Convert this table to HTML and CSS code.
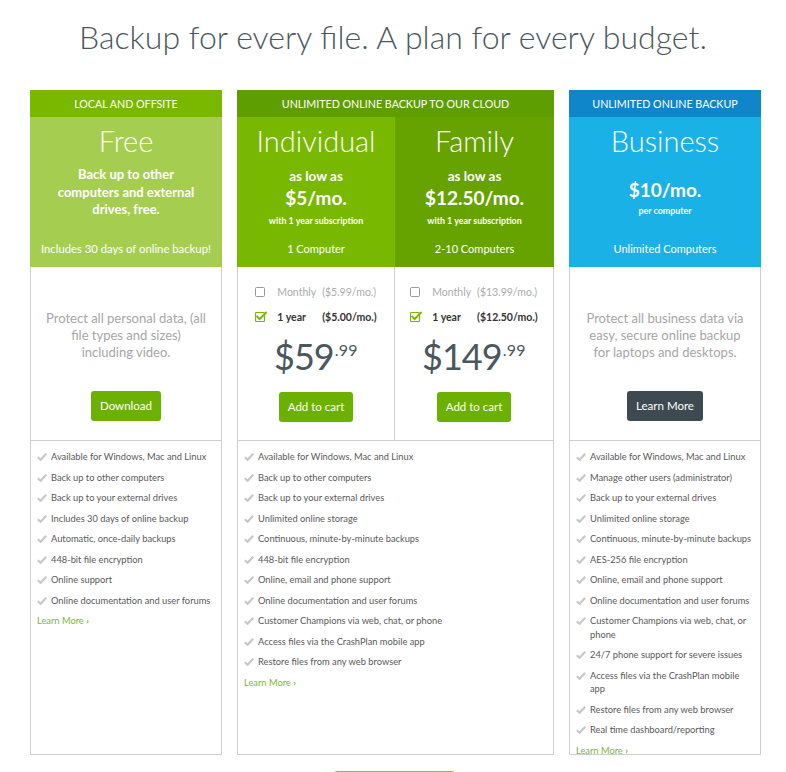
FILE: index.html
```html
<!DOCTYPE html>
<html lang="en">
<head>
<meta charset="utf-8">
<title>Backup plans</title>
<link rel="stylesheet" href="styles.css">
</head>
<body>
<h1 class="page-title">Backup for every file. A plan for every budget.</h1>

<div class="plans">

  <section class="plan plan-free">
    <div class="band band-free">Local and offsite</div>
    <div class="hero hero-free">
      <h2 class="hero-name">Free</h2>
      <p class="hero-lead">Back up to other computers and external drives, free.</p>
      <p class="hero-foot">Includes 30 days of online backup!</p>
    </div>
    <div class="mid mid-single">
      <p class="mid-text">Protect all personal data, (all file types and sizes)<br>including video.</p>
      <a class="btn btn-green">Download</a>
    </div>
    <div class="features">
      <ul class="feature-list">
        <li><svg class="tick" viewBox="0 0 10 8"><path d="M0.8 4.2 L3.6 6.8 L9.2 0.8"/></svg><span>Available for Windows, Mac and Linux</span></li>
        <li><svg class="tick" viewBox="0 0 10 8"><path d="M0.8 4.2 L3.6 6.8 L9.2 0.8"/></svg><span>Back up to other computers</span></li>
        <li><svg class="tick" viewBox="0 0 10 8"><path d="M0.8 4.2 L3.6 6.8 L9.2 0.8"/></svg><span>Back up to your external drives</span></li>
        <li><svg class="tick" viewBox="0 0 10 8"><path d="M0.8 4.2 L3.6 6.8 L9.2 0.8"/></svg><span>Includes 30 days of online backup</span></li>
        <li><svg class="tick" viewBox="0 0 10 8"><path d="M0.8 4.2 L3.6 6.8 L9.2 0.8"/></svg><span>Automatic, once-daily backups</span></li>
        <li><svg class="tick" viewBox="0 0 10 8"><path d="M0.8 4.2 L3.6 6.8 L9.2 0.8"/></svg><span>448-bit file encryption</span></li>
        <li><svg class="tick" viewBox="0 0 10 8"><path d="M0.8 4.2 L3.6 6.8 L9.2 0.8"/></svg><span>Online support</span></li>
        <li><svg class="tick" viewBox="0 0 10 8"><path d="M0.8 4.2 L3.6 6.8 L9.2 0.8"/></svg><span>Online documentation and user forums</span></li>
      </ul>
      <a class="learn">Learn More <span class="chev">›</span></a>
    </div>
  </section>

  <section class="plan plan-cloud">
    <div class="band band-cloud">Unlimited online backup to our cloud</div>
    <div class="pair">
      <div class="sub">
        <div class="hero hero-ind">
          <h2 class="hero-name">Individual</h2>
          <p class="hero-small">as low as</p>
          <p class="hero-rate">$5/mo.</p>
          <p class="hero-note">with 1 year subscription</p>
          <p class="hero-foot">1 Computer</p>
        </div>
        <div class="mid mid-buy mid-left">
          <table class="terms">
            <tr class="term term-off">
              <td class="term-box"><span class="box"></span></td>
              <td class="term-label">Monthly</td>
              <td class="term-price">($5.99/mo.)</td>
            </tr>
            <tr class="term term-on">
              <td class="term-box"><svg class="box-on" viewBox="0 0 12 11"><rect x="0.5" y="1.5" width="9" height="9" rx="1"/><path d="M2.2 5.6 L4.6 8 L11 1.6"/></svg></td>
              <td class="term-label">1 year</td>
              <td class="term-price">($5.00/mo.)</td>
            </tr>
          </table>
          <div class="price"><span class="price-main">$59</span><span class="price-cents">.99</span></div>
          <a class="btn btn-green">Add to cart</a>
        </div>
      </div>
      <div class="sub">
        <div class="hero hero-fam">
          <h2 class="hero-name">Family</h2>
          <p class="hero-small">as low as</p>
          <p class="hero-rate">$12.50/mo.</p>
          <p class="hero-note">with 1 year subscription</p>
          <p class="hero-foot">2-10 Computers</p>
        </div>
        <div class="mid mid-buy mid-right">
          <table class="terms">
            <tr class="term term-off">
              <td class="term-box"><span class="box"></span></td>
              <td class="term-label">Monthly</td>
              <td class="term-price">($13.99/mo.)</td>
            </tr>
            <tr class="term term-on">
              <td class="term-box"><svg class="box-on" viewBox="0 0 12 11"><rect x="0.5" y="1.5" width="9" height="9" rx="1"/><path d="M2.2 5.6 L4.6 8 L11 1.6"/></svg></td>
              <td class="term-label">1 year</td>
              <td class="term-price">($12.50/mo.)</td>
            </tr>
          </table>
          <div class="price"><span class="price-main">$149</span><span class="price-cents">.99</span></div>
          <a class="btn btn-green">Add to cart</a>
        </div>
      </div>
    </div>
    <div class="features">
      <ul class="feature-list">
        <li><svg class="tick" viewBox="0 0 10 8"><path d="M0.8 4.2 L3.6 6.8 L9.2 0.8"/></svg><span>Available for Windows, Mac and Linux</span></li>
        <li><svg class="tick" viewBox="0 0 10 8"><path d="M0.8 4.2 L3.6 6.8 L9.2 0.8"/></svg><span>Back up to other computers</span></li>
        <li><svg class="tick" viewBox="0 0 10 8"><path d="M0.8 4.2 L3.6 6.8 L9.2 0.8"/></svg><span>Back up to your external drives</span></li>
        <li><svg class="tick" viewBox="0 0 10 8"><path d="M0.8 4.2 L3.6 6.8 L9.2 0.8"/></svg><span>Unlimited online storage</span></li>
        <li><svg class="tick" viewBox="0 0 10 8"><path d="M0.8 4.2 L3.6 6.8 L9.2 0.8"/></svg><span>Continuous, minute-by-minute backups</span></li>
        <li><svg class="tick" viewBox="0 0 10 8"><path d="M0.8 4.2 L3.6 6.8 L9.2 0.8"/></svg><span>448-bit file encryption</span></li>
        <li><svg class="tick" viewBox="0 0 10 8"><path d="M0.8 4.2 L3.6 6.8 L9.2 0.8"/></svg><span>Online, email and phone support</span></li>
        <li><svg class="tick" viewBox="0 0 10 8"><path d="M0.8 4.2 L3.6 6.8 L9.2 0.8"/></svg><span>Online documentation and user forums</span></li>
        <li><svg class="tick" viewBox="0 0 10 8"><path d="M0.8 4.2 L3.6 6.8 L9.2 0.8"/></svg><span>Customer Champions via web, chat, or phone</span></li>
        <li><svg class="tick" viewBox="0 0 10 8"><path d="M0.8 4.2 L3.6 6.8 L9.2 0.8"/></svg><span>Access files via the CrashPlan mobile app</span></li>
        <li><svg class="tick" viewBox="0 0 10 8"><path d="M0.8 4.2 L3.6 6.8 L9.2 0.8"/></svg><span>Restore files from any web browser</span></li>
      </ul>
      <a class="learn">Learn More <span class="chev">›</span></a>
    </div>
  </section>

  <section class="plan plan-business">
    <div class="band band-business">Unlimited online backup</div>
    <div class="hero hero-business">
      <h2 class="hero-name">Business</h2>
      <p class="hero-rate hero-rate-solo">$10/mo.</p>
      <p class="hero-note">per computer</p>
      <p class="hero-foot">Unlimited Computers</p>
    </div>
    <div class="mid mid-single">
      <p class="mid-text">Protect all business data via easy, secure online backup for laptops and desktops.</p>
      <a class="btn btn-dark">Learn More</a>
    </div>
    <div class="features">
      <ul class="feature-list">
        <li><svg class="tick" viewBox="0 0 10 8"><path d="M0.8 4.2 L3.6 6.8 L9.2 0.8"/></svg><span>Available for Windows, Mac and Linux</span></li>
        <li><svg class="tick" viewBox="0 0 10 8"><path d="M0.8 4.2 L3.6 6.8 L9.2 0.8"/></svg><span>Manage other users (administrator)</span></li>
        <li><svg class="tick" viewBox="0 0 10 8"><path d="M0.8 4.2 L3.6 6.8 L9.2 0.8"/></svg><span>Back up to your external drives</span></li>
        <li><svg class="tick" viewBox="0 0 10 8"><path d="M0.8 4.2 L3.6 6.8 L9.2 0.8"/></svg><span>Unlimited online storage</span></li>
        <li><svg class="tick" viewBox="0 0 10 8"><path d="M0.8 4.2 L3.6 6.8 L9.2 0.8"/></svg><span>Continuous, minute-by-minute backups</span></li>
        <li><svg class="tick" viewBox="0 0 10 8"><path d="M0.8 4.2 L3.6 6.8 L9.2 0.8"/></svg><span>AES-256 file encryption</span></li>
        <li><svg class="tick" viewBox="0 0 10 8"><path d="M0.8 4.2 L3.6 6.8 L9.2 0.8"/></svg><span>Online, email and phone support</span></li>
        <li><svg class="tick" viewBox="0 0 10 8"><path d="M0.8 4.2 L3.6 6.8 L9.2 0.8"/></svg><span>Online documentation and user forums</span></li>
        <li><svg class="tick" viewBox="0 0 10 8"><path d="M0.8 4.2 L3.6 6.8 L9.2 0.8"/></svg><span>Customer Champions via web, chat, or phone</span></li>
        <li><svg class="tick" viewBox="0 0 10 8"><path d="M0.8 4.2 L3.6 6.8 L9.2 0.8"/></svg><span>24/7 phone support for severe issues</span></li>
        <li><svg class="tick" viewBox="0 0 10 8"><path d="M0.8 4.2 L3.6 6.8 L9.2 0.8"/></svg><span>Access files via the CrashPlan mobile app</span></li>
        <li><svg class="tick" viewBox="0 0 10 8"><path d="M0.8 4.2 L3.6 6.8 L9.2 0.8"/></svg><span>Restore files from any web browser</span></li>
        <li><svg class="tick" viewBox="0 0 10 8"><path d="M0.8 4.2 L3.6 6.8 L9.2 0.8"/></svg><span>Real time dashboard/reporting</span></li>
      </ul>
      <a class="learn">Learn More <span class="chev">›</span></a>
    </div>
  </section>

</div>

<div class="more"><span class="more-btn"></span></div>
</body>
</html>
```

FILE: styles.css
```css
* { box-sizing: border-box; }

html, body {
  margin: 0;
  padding: 0;
  background: #ffffff;
}

body {
  font-family: "Lato", "Open Sans", "Liberation Sans", sans-serif;
  color: #555;
}

p { margin: 0; }

.page-title {
  margin: 17px 0 33px;
  font-size: 32px;
  line-height: 40px;
  font-weight: 300;
  color: #4b575e;
  text-align: center;
  letter-spacing: 0;
}

.plans {
  display: flex;
  align-items: stretch;
  gap: 15px;
  padding-left: 30px;
}

.plan {
  display: flex;
  flex-direction: column;
  width: 192px;
}

.plan-cloud { width: 317px; }

.band {
  height: 27px;
  line-height: 27px;
  text-align: center;
  color: #fff;
  font-size: 10.7px;
  text-transform: uppercase;
  white-space: nowrap;
}

.band-free { background: #7ab800; }
.band-cloud { background: #5f9e00; }
.band-business { background: #0f86c9; }

.hero {
  height: 150px;
  display: flex;
  flex-direction: column;
  align-items: center;
  color: #fff;
  text-align: center;
  padding: 8px 6px 11px;
}

.hero-free { background: #a5ce50; }
.hero-ind { background: #79b800; }
.hero-fam { background: #66a300; }
.hero-business { background: #1ab1e7; }

.hero-name {
  margin: 0;
  font-size: 29px;
  line-height: 32px;
  font-weight: 300;
}

.hero-lead {
  max-width: 152px;
  margin-top: 9px;
  font-size: 13px;
  line-height: 17.5px;
  font-weight: 700;
}

.hero-small {
  margin-top: 12px;
  font-size: 13.5px;
  line-height: 14px;
  font-weight: 700;
}

.hero-rate {
  margin-top: 4px;
  font-size: 19px;
  line-height: 22px;
  font-weight: 700;
}

.hero-rate-solo { margin-top: 22px; }

.hero-note {
  margin-top: 6px;
  font-size: 8.9px;
  line-height: 12px;
  font-weight: 700;
}

.hero-rate-solo + .hero-note { margin-top: 4px; }

.hero-foot {
  margin-top: auto;
  font-size: 11px;
  line-height: 14px;
}

.hero-free .hero-foot { font-size: 11.3px; }

.mid {
  height: 174px;
  display: flex;
  flex-direction: column;
  align-items: center;
  border-bottom: 1px solid #cfcfcf;
}

.mid-single {
  border-left: 1px solid #cfcfcf;
  border-right: 1px solid #cfcfcf;
  padding: 43px 10px 0;
}

.mid-left { border-left: 1px solid #cfcfcf; border-right: 1px solid #cfcfcf; }
.mid-right { border-right: 1px solid #cfcfcf; }

.mid-text {
  text-align: center;
  font-size: 13px;
  line-height: 17px;
  color: #a6a6a6;
}

.btn {
  display: inline-block;
  height: 30px;
  line-height: 30px;
  padding: 0 9px;
  border-radius: 3px;
  color: #fff;
  font-size: 11.5px;
  text-decoration: none;
  margin-top: 30px;
}

.btn-green { background: #6cb100; }
.btn-dark { background: #3d4a51; }

.pair {
  display: grid;
  grid-template-columns: 158px 159px;
}

.sub { display: flex; flex-direction: column; }

.mid-buy { padding-top: 12px; }

.terms {
  border-collapse: collapse;
  font-size: 10.5px;
}

.terms td {
  padding: 0;
  height: 25px;
  vertical-align: middle;
}

.term-box { width: 22px; }
.term-label { padding-right: 6px !important; }

.term-off { color: #ababab; }
.term-on { color: #333; font-weight: 700; }

.box {
  display: block;
  width: 10px;
  height: 10px;
  border: 1px solid #9b9b9b;
  border-radius: 1.5px;
}

.box-on {
  display: block;
  width: 12px;
  height: 11px;
  fill: none;
}
.box-on rect { stroke: #7ab800; stroke-width: 1.2; }
.box-on path { stroke: #7ab800; stroke-width: 2; stroke-linecap: square; }

.price {
  display: flex;
  justify-content: center;
  align-items: flex-start;
  margin-top: 9px;
  color: #4b575e;
}

.price-main {
  font-size: 36px;
  line-height: 36px;
  font-weight: 400;
  letter-spacing: -1px;
}

.price-cents {
  font-size: 16px;
  line-height: 16px;
  margin-top: 4px;
  margin-left: 1px;
  letter-spacing: 0.3px;
}

.mid-buy .btn { margin-top: 18px; }

.features {
  flex: 1;
  border-left: 1px solid #cfcfcf;
  border-right: 1px solid #cfcfcf;
  border-bottom: 1px solid #cfcfcf;
  padding: 9px 8px 0 6px;
}

.feature-list {
  list-style: none;
  margin: 0;
  padding: 0;
}

.feature-list li {
  display: flex;
  align-items: flex-start;
  gap: 4px;
  font-size: 9.3px;
  line-height: 13.5px;
  margin-bottom: 7px;
  color: #595959;
}

.tick {
  flex: none;
  width: 10px;
  height: 8px;
  margin-top: 3px;
  fill: none;
  stroke: #c8c8c8;
  stroke-width: 2.2;
}

.learn {
  display: block;
  font-size: 9.3px;
  line-height: 13.5px;
  margin-bottom: -3px;
  color: #7cb82f;
  text-decoration: none;
}

.chev { font-weight: 700; }

.more {
  display: flex;
  justify-content: center;
  padding: 16px 0 0 0;
}

.more-btn {
  display: block;
  width: 121px;
  height: 32px;
  margin-left: 3px;
  background: #8cc23a;
  border-radius: 3px 3px 0 0;
}
```
